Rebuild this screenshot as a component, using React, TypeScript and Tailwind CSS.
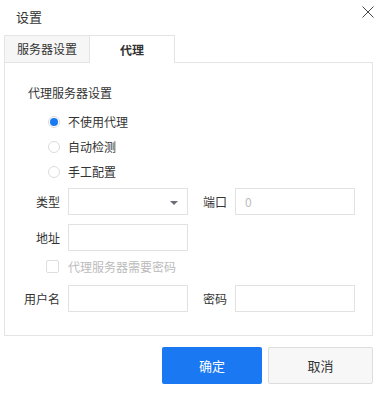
import { useState } from 'react';

const labelCls = 'shrink-0 text-right text-[12px] leading-[20px] text-[#333]';
const inputCls =
    'w-[120px] h-[27px] shrink-0 border border-[#e2e2e2] bg-white px-[9px] text-[12px] text-[#333] outline-none placeholder:text-[#bbb]';

function Radio({ checked, label, onClick }: { checked: boolean; label: string; onClick: () => void }) {
    return (
        <div className="flex h-[25px] items-center cursor-pointer" onClick={onClick}>
            <span className="flex h-[12px] w-[12px] items-center justify-center rounded-full border border-[#dcdcdc] bg-white">
                {checked && <span className="h-[8px] w-[8px] rounded-full bg-[#1a78f2]" />}
            </span>
            <span className="ml-[8px] text-[12px] leading-[20px] text-[#333]">{label}</span>
        </div>
    );
}

export default function App() {
    const [mode, setMode] = useState(0);
    const options = ['不使用代理', '自动检测', '手工配置'];

    return (
        <div
            className="w-[383px] h-[395px] bg-white"
            style={{ fontFamily: '"Noto Sans CJK SC", "Noto Sans", sans-serif' }}
        >
            {/* header */}
            <div className="flex h-[35px] items-start justify-between">
                <div className="pl-[16px] pt-[7px] text-[13px] leading-[20px] text-[#333]">设置</div>
                <button className="mr-[9px] mt-[6px] h-[12px] w-[12px]">
                    <svg width="12" height="12" viewBox="0 0 12 12">
                        <path d="M0.5 0.5L11.5 11.5M11.5 0.5L0.5 11.5" stroke="#444" strokeWidth="1" />
                    </svg>
                </button>
            </div>

            <div className="ml-[4px] w-[369px]">
                {/* tabs */}
                <div className="flex h-[28px]">
                    <div className="flex w-[86px] items-center justify-center border border-[#e4e4e4] bg-[#f6f6f6] text-[12px] text-[#333]">
                        服务器设置
                    </div>
                    <div className="flex w-[85px] items-center justify-center border-t border-r border-[#e4e4e4] bg-white text-[12px] font-bold text-[#333]">
                        代理
                    </div>
                    <div className="flex-1 border-b border-[#e4e4e4]" />
                </div>

                {/* panel */}
                <div className="border-x border-b border-[#e4e4e4] pt-[20px] pb-[23px]">
                    <div className="ml-[23px] text-[12px] leading-[20px] text-[#333]">代理服务器设置</div>

                    <div className="ml-[43px] mt-[6px] flex flex-col">
                        {options.map((o, i) => (
                            <Radio key={o} label={o} checked={mode === i} onClick={() => setMode(i)} />
                        ))}
                    </div>

                    <div className="ml-[15px] mt-[4px] flex items-center">
                        <span className={`${labelCls} w-[40px]`}>类型</span>
                        <div className="relative ml-[8px] h-[27px] w-[120px] shrink-0 border border-[#e2e2e2] bg-white">
                            <svg className="absolute right-[9px] top-[12px]" width="8" height="4" viewBox="0 0 8 4">
                                <path d="M0 0H8L4 4Z" fill="#6b6f75" />
                            </svg>
                        </div>
                        <span className={`${labelCls} w-[39px]`}>端口</span>
                        <input className={`${inputCls} ml-[8px]`} placeholder="0" />
                    </div>

                    <div className="ml-[15px] mt-[9px] flex items-center">
                        <span className={`${labelCls} w-[40px]`}>地址</span>
                        <input className={`${inputCls} ml-[8px]`} />
                    </div>

                    <div className="ml-[41px] mt-[9px] flex h-[13px] items-center">
                        <span className="h-[13px] w-[13px] rounded-[2px] border border-[#dedede] bg-white" />
                        <span className="ml-[9px] text-[12px] leading-[20px] text-[#bbb]">代理服务器需要密码</span>
                    </div>

                    <div className="ml-[15px] mt-[12px] flex items-center">
                        <span className={`${labelCls} w-[40px]`}>用户名</span>
                        <input className={`${inputCls} ml-[8px]`} />
                        <span className={`${labelCls} w-[39px]`}>密码</span>
                        <input className={`${inputCls} ml-[8px]`} type="password" />
                    </div>
                </div>

                {/* buttons */}
                <div className="mt-[11px] flex justify-end gap-[6px]">
                    <button className="h-[37px] w-[100px] rounded-[2px] bg-[#1a78f2] text-[13px] text-white">确定</button>
                    <button className="h-[37px] w-[105px] rounded-[2px] border border-[#dcdcdc] bg-[#f7f7f7] text-[13px] text-[#333]">
                        取消
                    </button>
                </div>
            </div>
        </div>
    );
}
